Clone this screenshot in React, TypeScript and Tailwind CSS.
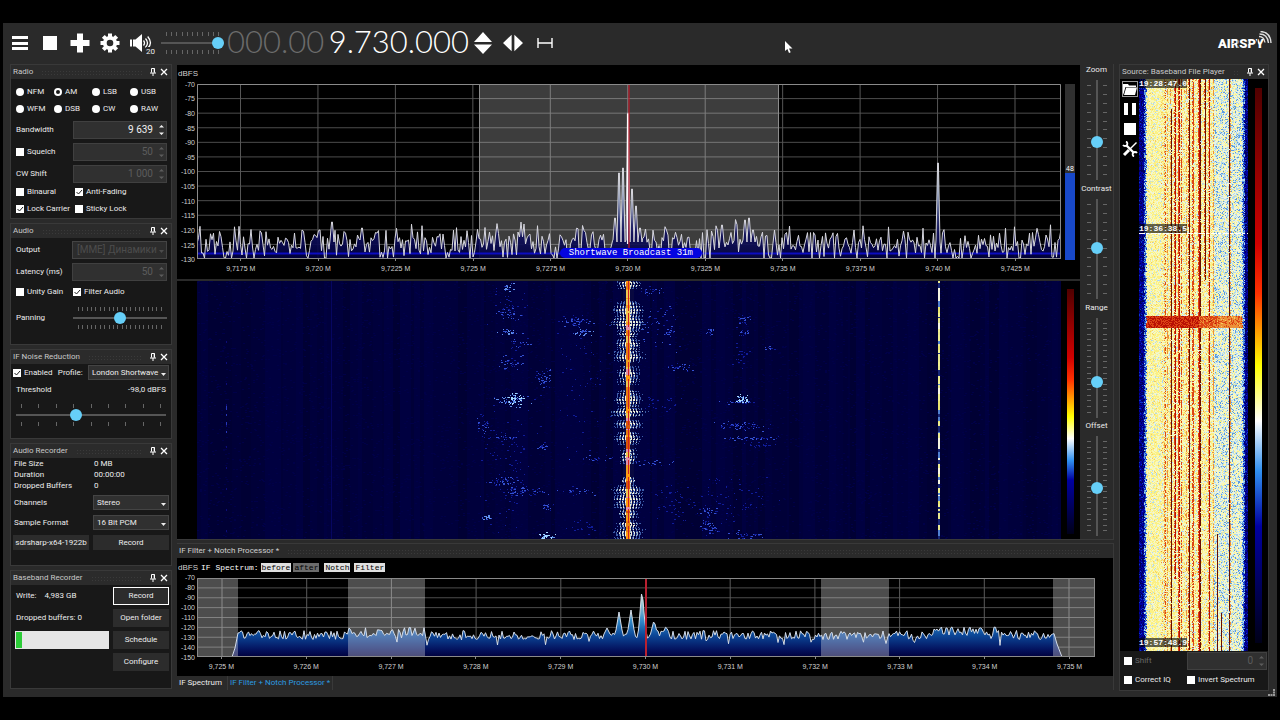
import { useId, type ReactNode } from "react";
import clsx from "clsx";

// ---------- helpers ----------

function createRandom(seed: number) {
  let state = seed;
  return () => {
    state = (state * 1664525 + 1013904223) % 4294967296;
    return state / 4294967296;
  };
}

type Point = [number, number];

function toPath(points: Point[]) {
  return points.map(([x, y], i) => `${i ? "L" : "M"}${x.toFixed(1)} ${y.toFixed(1)}`).join("");
}

// ---------- spectrum data ----------

function buildSpectrum(): Point[] {
  const random = createRandom(41);
  const peaks: Point[] = [[418, 134], [422, 89], [426, 84], [431, 29], [435, 105], [439, 122], [443, 144], [741, 79], [135, 138], [165, 144], [525, 141], [548, 136], [552, 134], [556, 146]];
  const points: Point[] = [];
  for (let x = 0; x <= 864; x += 1.5) {
    const bump = (x > 285 && x < 350) || (x > 515 && x < 565) ? 5 : 0;
    points.push([x, Math.min(174, 159 - bump + (random() - 0.5) * 26 + (random() - 0.5) * 14 + (random() > 0.92 ? 14 : 0))]);
  }
  return points
    .filter(([x]) => !peaks.some(([px]) => Math.abs(px - x) < 2.1))
    .concat(peaks.flatMap(([x, y]): Point[] => [[x - 2, 156], [x - 0.4, y], [x + 0.4, y], [x + 2, 158]]))
    .sort((a, b) => a[0] - b[0]);
}

function buildFilterSpectrum(): Point[] {
  const random = createRandom(97);
  const peaks: Point[] = [[410, 50], [422, 34], [434, 32], [445, 10], [457, 42], [469, 48]];
  const points: Point[] = [[35, 79], [38, 70]];
  for (let x = 41; x <= 857; x += 1.5) {
    let y = 57 + (random() - 0.5) * 9 + (random() > 0.95 ? 6 : 0);
    if (x > 150 && x < 230) y -= 3;
    if (x > 730 && x < 800) y -= 4;
    for (const [px, py] of peaks) {
      const distance = Math.abs(px - x);
      if (distance < 4) y = Math.min(y, py + (distance * (58 - py)) / 4);
    }
    points.push([x, y]);
  }
  points.push([860, 66], [865, 79]);
  return points;
}

const spectrum = buildSpectrum();
const filterSpectrum = buildFilterSpectrum();

// ---------- waterfall data ----------

const playerPalette = ["#00005c", "#0000a0", "#1038c8", "#5c9ce0", "#b0d8f0", "#eaf4e4", "#faf8b4", "#fbf084", "#f6cc60", "#ec9038", "#dc4414", "#b81004", "#681000"];

const playerStripes = [
  { x: 25, level: 9, from: 0, to: 572, fill: 0.45 },
  { x: 26, level: 10, from: 0, to: 572, fill: 0.4 },
  { x: 28, level: 9, from: 0, to: 572, fill: 0.5 },
  { x: 31, level: 9, from: 0, to: 572, fill: 0.5 },
  { x: 32, level: 12, from: 30, to: 572, fill: 0.97 },
  { x: 35, level: 10, from: 0, to: 500, fill: 0.5 },
  { x: 36, level: 11, from: 0, to: 500, fill: 0.9 },
  { x: 39, level: 10, from: 0, to: 572, fill: 0.8 },
  { x: 40, level: 11, from: 0, to: 572, fill: 0.75 },
  { x: 42, level: 10, from: 0, to: 572, fill: 0.6 },
  { x: 47, level: 9, from: 0, to: 572, fill: 0.45 },
  { x: 49, level: 10, from: 0, to: 572, fill: 0.45 },
  { x: 50, level: 12, from: 0, to: 572, fill: 0.97 },
  { x: 53, level: 10, from: 0, to: 572, fill: 0.5 },
  { x: 54, level: 10, from: 0, to: 572, fill: 0.75 },
  { x: 59, level: 10, from: 0, to: 572, fill: 0.6 },
  { x: 60, level: 11, from: 0, to: 572, fill: 0.97 },
  { x: 61, level: 12, from: 0, to: 572, fill: 0.9 },
  { x: 65, level: 10, from: 0, to: 202, fill: 0.5 },
  { x: 66, level: 12, from: 0, to: 202, fill: 0.97 },
  { x: 69, level: 9, from: 0, to: 572, fill: 0.5 },
  { x: 70, level: 11, from: 0, to: 572, fill: 0.85 },
  { x: 74, level: 9, from: 0, to: 572, fill: 0.55 },
  { x: 78, level: 12, from: 455, to: 572, fill: 1 },
  { x: 82, level: 12, from: 534, to: 572, fill: 1 },
  { x: 90, level: 12, from: 0, to: 572, fill: 0.97 },
  { x: 91, level: 9, from: 0, to: 572, fill: 0.5 },
];

function playerLevel(x: number, y: number, random: () => number) {
  const r = random();
  const left = 7 + (random() > 0.6 ? 1 : 0);
  const right = 103 - (random() > 0.6 ? 1 : 0);
  if (x < left - 2 || x > right + 2) return r < 0.4 ? 0 : r < 0.92 ? 1 : 2;
  if (x < left || x > right) return r < 0.4 ? 2 : r < 0.8 ? 3 : 4;
  if (y >= 237 && y < 249) {
    const base = x < 60 ? 11.3 : x < 78 ? 10.6 : 9.9;
    return Math.round(base - r * 1.5);
  }
  const stripe = playerStripes.find((s) => s.x === x && y >= s.from && y < s.to);
  if (stripe && r < stripe.fill) return stripe.level;
  const q = random();
  if (x < 22) return q < 0.06 ? 4 : q < 0.2 ? 5 : q < 0.55 ? 6 : q < 0.97 ? 7 : 8;
  if (x < 75) return q < 0.08 ? 4 : q < 0.24 ? 5 : q < 0.55 ? 6 : q < 0.88 ? 7 : q < 0.97 ? 8 : 9;
  return q < 0.12 ? 3 : q < 0.36 ? 4 : q < 0.64 ? 5 : q < 0.9 ? 6 : 7;
}

function buildPlayerWaterfall() {
  const random = createRandom(7);
  const paths = playerPalette.map(() => "");
  for (let y = 0; y < 572; y++) {
    let start = 0;
    let current = playerLevel(0, y, random);
    for (let x = 1; x <= 109; x++) {
      const level = x < 109 ? playerLevel(x, y, random) : -1;
      if (level !== current) {
        paths[current] += `M${start} ${y}.5h${x - start}`;
        start = x;
        current = level;
      }
    }
  }
  return paths;
}

// [x, y, spread x, spread y, count, brightness]
const speckClusters = [
  [311, 6, 6, 4, 16, 2], [310, 32, 10, 9, 30, 1], [311, 51, 9, 3, 22, 2], [320, 62, 10, 8, 24, 1], [313, 81, 10, 8, 34, 1],
  [346, 96, 7, 8, 40, 1], [316, 118, 8, 6, 60, 3], [313, 119, 18, 3, 40, 2], [286, 144, 6, 8, 26, 1], [306, 156, 16, 2, 24, 1],
  [346, 166, 5, 4, 18, 1], [381, 40, 14, 6, 50, 1], [386, 51, 7, 3, 26, 2], [453, 9, 14, 3, 22, 1], [471, 51, 6, 3, 14, 1],
  [486, 86, 12, 4, 26, 1], [513, 51, 5, 4, 14, 1], [546, 40, 8, 6, 22, 1], [546, 52, 6, 3, 16, 1], [572, 67, 6, 2, 10, 1],
  [543, 76, 8, 14, 22, 0], [545, 118, 6, 4, 36, 3], [543, 121, 16, 2, 24, 1], [543, 145, 24, 4, 60, 1], [553, 157, 22, 2, 40, 1],
  [562, 164, 18, 2, 20, 0], [306, 200, 14, 4, 40, 1], [326, 209, 20, 5, 54, 1], [350, 226, 6, 3, 16, 1], [290, 236, 6, 2, 20, 2],
  [350, 255, 8, 3, 36, 3], [513, 230, 10, 4, 30, 1], [513, 246, 8, 6, 40, 1], [546, 254, 14, 4, 34, 1], [396, 177, 20, 3, 22, 1],
  [453, 182, 20, 4, 26, 1], [466, 123, 20, 8, 26, 0], [380, 210, 16, 4, 22, 1], [310, 20, 20, 20, 26, 0], [540, 220, 30, 20, 60, 0],
  [390, 100, 40, 70, 70, 0], [460, 40, 24, 24, 50, 1], [310, 180, 24, 60, 90, 0], [480, 220, 24, 20, 50, 0], [386, 245, 14, 6, 20, 0],
];

const speckColors = ["#101c98", "#3450d0", "#6090ec", "#a4d8ff"];

function buildSpecks() {
  const random = createRandom(23);
  const paths = speckColors.map(() => "");
  const spread = () => (random() + random() + random() - 1.5) / 1.5;
  for (const [cx, cy, rx, ry, count, bright] of speckClusters) {
    for (let i = 0; i < count; i++) {
      const x = Math.round(cx + spread() * rx * 1.6);
      const y = Math.round(cy + spread() * ry * 1.6);
      if (y < 0 || y > 257) continue;
      const level = Math.max(0, bright - (random() > 0.55 ? 1 : 0));
      paths[level] += `M${x} ${y}.5h${random() > 0.6 ? 2 : 1}`;
    }
  }
  return paths;
}

// [y, half height, half width]
const bursts = [
  [2, 5, 14], [29, 9, 16], [42, 7, 17], [52, 3, 12], [64, 7, 14], [75, 6, 17], [94, 9, 13], [117, 8, 15], [131, 4, 18],
  [143, 4, 17], [157, 6, 14], [175, 8, 11], [199, 4, 8], [209, 5, 16], [220, 8, 17], [232, 4, 12], [243, 4, 12], [252, 6, 17],
];

function buildBursts() {
  const random = createRandom(5);
  let bright = "";
  let warm = "";
  let dim = "";
  for (const [cy, hh, hw] of bursts) {
    for (let y = Math.max(0, cy - hh); y <= Math.min(257, cy + hh); y++) {
      const rowGain = y % 3 === 0 ? 0.4 + random() * 0.3 : 0.6 + random() * 0.6;
      const lean = Math.abs(y - cy) / (hh + 1);
      const reach = hw * (0.7 + random() * 0.5);
      for (let k = 2; k < reach; k++) {
        const wave = Math.cos((k + lean * 1.6) * 2.15) * 0.5 + 0.5;
        for (const side of [-1, 1]) {
          const power = wave * rowGain * (1.25 - k / hw) * (1.15 - lean * 0.6) + (random() - 0.5) * 0.25;
          const dot = `M${431 + side * k} ${y}.5h1`;
          if (power > 0.62) bright += dot;
          else if (power > 0.48) warm += dot;
          else if (power > 0.26) dim += dot;
        }
      }
    }
  }
  return { bright, warm, dim };
}

function buildStripes() {
  const random = createRandom(77);
  const shades = ["#000034", "#000038", "#00003c", "#000040"];
  const stripes: { x: number; width: number; color: string }[] = [];
  for (let x = 0; x < 864; ) {
    const width = 2 + Math.floor(random() * 10);
    stripes.push({ x, width, color: shades[Math.floor(random() * shades.length)] });
    x += width;
  }
  return stripes;
}

function buildGrain() {
  const random = createRandom(311);
  let d = "";
  for (let i = 0; i < 6000; i++) {
    d += `M${Math.floor(random() * 864)} ${Math.floor(random() * 258)}.5h2`;
  }
  return d;
}

function buildCarrier(seed: number, colors: string[], maxLength: number) {
  const random = createRandom(seed);
  const parts: { y: number; height: number; color: string }[] = [];
  for (let y = 0; y < 258; ) {
    const height = 1 + Math.floor(random() * maxLength);
    parts.push({ y, height, color: colors[Math.floor(random() * colors.length)] });
    y += height;
  }
  return parts;
}

const playerWaterfall = buildPlayerWaterfall();
const specks = buildSpecks();
const burstPaths = buildBursts();
const stripes = buildStripes();
const grain = buildGrain();
const mainCarrier = buildCarrier(13, ["#e88010", "#f0a020", "#ff9c10", "#f0c850", "#d85808", "#e090a8"], 8);
const sideCarrier = buildCarrier(29, ["#f0f090", "#f4f4e0", "#e8e470", "#5080d0", "#182878", "#e8e890"], 6);

// ---------- controls ----------

function Panel({ title, className, children }: { title: string; className?: string; children: ReactNode }) {
  return (
    <section className={clsx("flex flex-col border border-[#393939] bg-[#181818]", className)}>
      <header className="flex h-[14px] shrink-0 items-center gap-2 bg-[#2b2b2b] pr-[3px] pl-[2px]">
        <h2 className="whitespace-nowrap text-[#c8c8c8]">{title}</h2>
        <span className="h-[5px] flex-1 bg-[radial-gradient(#3a3a3a_35%,transparent_40%)] bg-[length:3px_3px]" />
        <button type="button" aria-label={`Pin ${title}`}>
          <svg width="6" height="8" viewBox="0 0 6 8" fill="none" stroke="#fff">
            <path d="M1.5 4.5V.5h3v4M0 5h6M3 5v3M4.2.5v4" />
          </svg>
        </button>
        <button type="button" aria-label={`Close ${title}`} className="-ml-1">
          <svg width="8" height="8" viewBox="0 0 8 8" stroke="#fff" strokeWidth="1.3">
            <path d="M1 1l6 6M7 1L1 7" />
          </svg>
        </button>
      </header>
      {children}
    </section>
  );
}

function Check({ label, checked, dim }: { label: string; checked?: boolean; dim?: boolean }) {
  return (
    <label className={clsx("flex items-center gap-[3px] whitespace-nowrap", dim && "text-[#6a6a6a]")}>
      <span className="relative size-2 shrink-0">
        <input type="checkbox" defaultChecked={checked} className="peer block size-2 appearance-none bg-white" />
        <svg viewBox="0 0 8 8" className="pointer-events-none absolute inset-0 hidden size-2 peer-checked:block" fill="none" stroke="#222">
          <path d="M1.5 4l2 2L7 2" />
        </svg>
      </span>
      {label}
    </label>
  );
}

function NumberBox({ label, value, disabled }: { label: string; value: string; disabled?: boolean }) {
  return (
    <span className={clsx("flex h-[18px] min-w-0 flex-1 items-center border border-[#404040] bg-[#303030] pr-[2px]", disabled ? "text-[#5c5c5c]" : "text-[#f0f0f0]")}>
      <input aria-label={label} defaultValue={value} disabled={disabled} className="w-full min-w-0 bg-transparent pr-[6px] text-right text-[10px] leading-4 outline-none" />
      <svg width="5" height="12" viewBox="0 0 5 12" fill="currentColor" className="shrink-0">
        <path d="M0 3.5L2.5 1 5 3.5zM0 8.5L2.5 11 5 8.5z" />
      </svg>
    </span>
  );
}

function Dropdown({ id, label, value, disabled, className }: { id?: string; label: string; value: string; disabled?: boolean; className?: string }) {
  return (
    <span className={clsx("relative border border-[#444]", disabled ? "bg-[#2c2c2c] text-[#4c4c4c]" : "bg-[#303030]", className)}>
      <select id={id} aria-label={label} disabled={disabled} className={clsx("block h-full w-full appearance-none bg-transparent outline-none", disabled ? "pl-1 text-[10px] leading-4" : "pl-[3px]")}>
        <option>{value}</option>
      </select>
      <svg width="5" height="3" viewBox="0 0 5 3" fill="currentColor" className="pointer-events-none absolute top-1/2 right-[2px]">
        <path d="M0 0h5L2.5 3z" />
      </svg>
    </span>
  );
}

function PushButton({ children, className }: { children: ReactNode; className?: string }) {
  return (
    <button type="button" className={clsx("flex items-center justify-center bg-[#2c2c2c] whitespace-nowrap", className)}>
      {children}
    </button>
  );
}

function Ticks({ count, vertical }: { count: number; vertical?: boolean }) {
  return (
    <span className={clsx("flex justify-between", vertical ? "h-[90px] w-1 flex-col" : "h-1 w-full")}>
      {Array.from({ length: count }, (_, i) => (
        <span key={i} className={clsx("bg-[#666]", vertical ? "h-px w-1" : "h-1 w-px")} />
      ))}
    </span>
  );
}

function HorizontalSlider({ label, ticks, value, className }: { label: string; ticks: number; value: number; className?: string }) {
  return (
    <span className={clsx("flex flex-col gap-px", className)}>
      <span className="px-[5px]"><Ticks count={ticks} /></span>
      <input
        type="range"
        aria-label={label}
        defaultValue={value}
        className="block h-3 w-full appearance-none bg-transparent bg-[linear-gradient(#555,#555)] bg-[length:100%_2px] bg-center bg-no-repeat [&::-webkit-slider-thumb]:size-3 [&::-webkit-slider-thumb]:appearance-none [&::-webkit-slider-thumb]:rounded-full [&::-webkit-slider-thumb]:bg-[#66cff8]"
      />
      <span className="px-[5px]"><Ticks count={ticks} /></span>
    </span>
  );
}

function VerticalSlider({ label, ticks, value }: { label: string; ticks: number; value: number }) {
  const id = useId();
  return (
    <div className="flex flex-1 flex-col items-center gap-1">
      <label htmlFor={id} className="leading-3">{label}</label>
      <div className="flex items-center">
        <Ticks count={ticks} vertical />
        <input
          id={id}
          type="range"
          defaultValue={value}
          className="block h-[100px] w-3 appearance-none bg-transparent bg-[linear-gradient(#555,#555)] bg-[length:2px_100%] bg-center bg-no-repeat [direction:rtl] [writing-mode:vertical-lr] [&::-webkit-slider-thumb]:size-3 [&::-webkit-slider-thumb]:appearance-none [&::-webkit-slider-thumb]:rounded-full [&::-webkit-slider-thumb]:bg-[#66cff8]"
        />
        <Ticks count={ticks} vertical />
      </div>
    </div>
  );
}

// ---------- toolbar ----------

function IconButton({ label, children, className }: { label: string; children: ReactNode; className?: string }) {
  return (
    <button type="button" aria-label={label} className={clsx("flex items-center justify-center", className ?? "size-5")}>
      {children}
    </button>
  );
}

function Toolbar() {
  return (
    <header className="relative flex h-[41px] items-center pb-[2px] pl-[7px]">
      <div className="flex gap-[10px]">
        <IconButton label="Menu">
          <svg width="16" height="16" viewBox="0 0 16 16" fill="#fff"><path d="M0 1h16v3H0zM0 7h16v3H0zM0 12h16v3H0z" /></svg>
        </IconButton>
        <IconButton label="Stop">
          <svg width="16" height="16" viewBox="0 0 16 16" fill="#fff"><path d="M1 1h14v14H1z" /></svg>
        </IconButton>
        <IconButton label="Add">
          <svg width="20" height="20" viewBox="0 0 20 20" fill="#fff"><path d="M7 .5h6V7h6.5v6H13v6.5H7V13H.5V7H7z" /></svg>
        </IconButton>
        <IconButton label="Settings">
          <svg width="20" height="20" viewBox="0 0 20 20" fill="none" stroke="#fff">
            <circle cx="10" cy="10" r="5.2" strokeWidth="3.8" />
            <path strokeWidth="4" d="M10 .5v3.5M10 16v3.5M.5 10H4M16 10h3.5M3.3 3.3l2.4 2.4M14.3 14.3l2.4 2.4M16.7 3.3l-2.4 2.4M5.7 14.3l-2.4 2.4" />
          </svg>
        </IconButton>
        <IconButton label="Mute" className="relative h-5 w-[25px] justify-start">
          <svg width="22" height="20" viewBox="0 0 22 20" fill="none" stroke="#fff" strokeWidth="1.3">
            <path d="M0 6.5h2v7H0zM3 6.5h2.5L12 1v18l-6.5-5.5H3z" fill="#fff" stroke="none" />
            <path d="M13.5 7.5q2 2.5 0 5M15.5 5.5q4 4.5 0 9M17.7 3.5q5.5 6.5 0 12" />
          </svg>
          <span className="absolute right-0 -bottom-[3px] bg-[#2a2a2a] text-[8px] leading-[9px]">20</span>
        </IconButton>
      </div>
      <HorizontalSlider label="Volume" ticks={11} value={100} className="ml-[6px] w-[63px]" />
      <div className="ml-[3px] flex w-[242px] justify-between pb-[2px] font-['Lato'] text-[31px] leading-none font-light text-white">
        <span className="text-[#6c6c6c]">000.00</span>
        <span>9.730.000</span>
      </div>
      <div className="ml-1 flex items-center gap-[10px]">
        <IconButton label="Step frequency">
          <svg width="20" height="24" viewBox="0 0 20 24" fill="#fff"><path d="M1 11L10 1l9 10zM1 13.5h18L10 23z" /></svg>
        </IconButton>
        <IconButton label="Shift spectrum">
          <svg width="22" height="18" viewBox="0 0 22 18" fill="#fff"><path d="M9.5 0v18L0 9zM12.5 0v18L22 9z" /></svg>
        </IconButton>
        <IconButton label="Center spectrum" className="ml-1 h-5 w-4">
          <svg width="16" height="10" viewBox="0 0 16 10" stroke="#fff" strokeWidth="1.4"><path d="M1 0v10M15 0v10M1 5h14" /></svg>
        </IconButton>
      </div>
      <svg width="56" height="24" viewBox="0 0 56 24" role="img" aria-label="AIRSPY" className="mr-[5px] ml-auto">
        <text x="2" y="17" fill="#fff" fontFamily="Roboto" fontWeight="900" fontSize="13">AIRSPY</text>
        <path d="M16.5 12.5h2M22 7v12M32 10v3M41.5 7v12" stroke="#2a2a2a" strokeWidth="0.7" />
        <path d="M43 5.5q5 0 6 6M43.5 3q8 0 9 9M44.5 .5q10 .5 10.5 11.5" fill="none" stroke="#ddd" strokeWidth="1.4" />
      </svg>
      <svg width="8" height="12" viewBox="0 0 8 12" className="absolute top-[18px] left-[782px]">
        <path d="M0 0v10l2.4-2L4 12l1.7-.7L4 7.5h3.5z" fill="#fff" />
      </svg>
    </header>
  );
}

// ---------- left dock ----------

const radioModes = ["NFM", "AM", "LSB", "USB", "WFM", "DSB", "CW", "RAW"];

function LeftDock() {
  return (
    <aside className="flex w-[162px] shrink-0 flex-col gap-1">
      <Panel title="Radio" className="h-[155px]">
        <div className="pt-1 pr-1 pl-[5px]">
          <div className="grid grid-cols-[repeat(4,38px)]">
            {radioModes.map((mode) => (
              <label key={mode} className="flex h-[17px] items-center gap-[3px]">
                <input
                  type="radio"
                  name="mode"
                  defaultChecked={mode === "AM"}
                  className="size-2 appearance-none rounded-full bg-white checked:border-2 checked:border-white checked:bg-[#181818]"
                />
                {mode}
              </label>
            ))}
          </div>
          <div className="mt-1 flex flex-col gap-1">
            <div className="flex items-center"><span className="w-[57px]">Bandwidth</span><NumberBox label="Bandwidth" value="9 639" /></div>
            <div className="flex items-center"><span className="w-[57px]"><Check label="Squelch" /></span><NumberBox label="Squelch level" value="50" disabled /></div>
            <div className="flex items-center"><span className="w-[57px]">CW Shift</span><NumberBox label="CW Shift" value="1 000" disabled /></div>
          </div>
          <div className="grid grid-cols-[59px_1fr]">
            <span className="flex h-[17px]"><Check label="Binaural" /></span>
            <span className="flex h-[17px]"><Check label="Anti-Fading" checked /></span>
            <span className="flex h-[17px]"><Check label="Lock Carrier" checked /></span>
            <span className="flex h-[17px]"><Check label="Sticky Lock" /></span>
          </div>
        </div>
      </Panel>

      <Panel title="Audio" className="h-[122px]">
        <div className="flex flex-col gap-1 pt-[3px] pr-1 pl-[5px]">
          <div className="flex items-center"><span className="w-[56px]">Output</span><Dropdown label="Output" value="[MME] Динамики" disabled className="h-[18px] min-w-0 flex-1" /></div>
          <div className="flex items-center"><span className="w-[56px]">Latency (ms)</span><NumberBox label="Latency" value="50" disabled /></div>
          <div className="-mt-[2px] grid h-[17px] grid-cols-[57px_1fr]">
            <Check label="Unity Gain" />
            <Check label="Filter Audio" checked />
          </div>
          <div className="mt-[3px] flex items-center"><span className="w-[57px]">Panning</span><HorizontalSlider label="Panning" ticks={20} value={50} className="flex-1" /></div>
        </div>
      </Panel>

      <Panel title="IF Noise Reduction" className="h-[90px]">
        <div className="flex h-[17px] items-center justify-between px-[2px]">
          <Check label="Enabled" checked />
          <label htmlFor="profile">Profile:</label>
          <Dropdown id="profile" label="Profile" value="London Shortwave" className="h-[15px] w-[81px]" />
        </div>
        <div className="flex h-[17px] items-center justify-between px-[5px]">
          <span>Threshold</span>
          <span>-98,0 dBFS</span>
        </div>
        <HorizontalSlider label="Threshold" ticks={9} value={39} className="mx-[5px] mt-[6px]" />
      </Panel>

      <Panel title="Audio Recorder" className="h-[123px]">
        <div className="px-[2px]">
          <dl className="grid grid-cols-[80px_1fr] pl-px leading-[11px]">
            <dt>File Size</dt><dd>0 MB</dd>
            <dt>Duration</dt><dd>00:00:00</dd>
            <dt>Dropped Buffers</dt><dd>0</dd>
          </dl>
          <div className="mt-1 grid grid-cols-[76px_76px] justify-between gap-y-[5px]">
            <label htmlFor="channels" className="pl-px leading-[15px]">Channels</label>
            <Dropdown id="channels" label="Channels" value="Stereo" className="h-[15px]" />
            <label htmlFor="format" className="pl-px leading-[15px]">Sample Format</label>
            <Dropdown id="format" label="Sample Format" value="16 Bit PCM" className="h-[15px]" />
            <PushButton className="h-[15px]">sdrsharp-x64-1922b</PushButton>
            <PushButton className="h-[15px]">Record</PushButton>
          </div>
        </div>
      </Panel>

      <Panel title="Baseband Recorder" className="h-[119px]">
        <div className="grid auto-rows-[18px] grid-cols-[1fr_56px] items-center gap-x-1 gap-y-1 px-[2px] pt-[2px]">
          <span className="flex gap-2 pl-[3px]"><span>Write:</span><span>4,983 GB</span></span>
          <PushButton className="h-full border border-white">Record</PushButton>
          <span className="pl-[3px]">Dropped buffers: 0</span>
          <PushButton className="h-full">Open folder</PushButton>
          <span role="progressbar" aria-label="Disk usage" aria-valuenow={6} className="ml-[2px] h-full bg-[#e6e6e6] p-px">
            <span className="block h-full w-[6%] bg-[#2ccc38]" />
          </span>
          <PushButton className="h-full">Schedule</PushButton>
          <span />
          <PushButton className="h-full">Configure</PushButton>
        </div>
      </Panel>
    </aside>
  );
}

// ---------- plots ----------

function YAxis({ from, step, count, className }: { from: number; step: number; count: number; className: string }) {
  return (
    <div className={clsx("flex flex-col pr-[2px] text-right", className)}>
      {Array.from({ length: count }, (_, i) => (
        <span key={i} className="flex flex-1 items-center justify-end leading-none">{from - i * step}</span>
      ))}
    </div>
  );
}

function XAxis({ labels, className }: { labels: string[]; className: string }) {
  return (
    <div className={clsx("flex", className)}>
      {labels.map((label) => (
        <span key={label} className="flex flex-1 flex-col items-center gap-[3px] whitespace-nowrap leading-[10px] before:h-[2px] before:w-px before:bg-[#888]">{label}</span>
      ))}
    </div>
  );
}

const spectrumTicks = ["9,7175 M", "9,720 M", "9,7225 M", "9,725 M", "9,7275 M", "9,730 M", "9,7325 M", "9,735 M", "9,7375 M", "9,740 M", "9,7425 M"];
const filterTicks = ["9,725 M", "9,726 M", "9,727 M", "9,728 M", "9,729 M", "9,730 M", "9,731 M", "9,732 M", "9,733 M", "9,734 M", "9,735 M"];

function SpectrumView() {
  return (
    <div className="flex h-[214px] bg-black font-['Liberation_Sans'] text-[7px] text-[#d0d0d0]">
      <div className="w-5 shrink-0">
        <div className="h-3 pt-1 pl-px text-[8px] leading-[10px]">dBFS</div>
        <YAxis from={-70} step={5} count={13} className="h-[190px]" />
      </div>
      <div className="min-w-0 flex-1 pt-[19px]">
        <div className="relative">
          <svg viewBox="0 0 864 175" preserveAspectRatio="none" className="block h-[175px] w-full">
            <defs>
              <linearGradient id="spectrum-fill" x1="0" y1="0" x2="0" y2="175" gradientUnits="userSpaceOnUse">
                <stop offset="0.15" stopColor="#e8e8f8" />
                <stop offset="0.6" stopColor="#8098c0" />
                <stop offset="0.85" stopColor="#101060" />
                <stop offset="1" stopColor="#000040" />
              </linearGradient>
            </defs>
            {Array.from({ length: 13 }, (_, i) => (
              <path key={i} d={`M0 ${(i * 175) / 12}H864`} stroke="#4c4c4c" />
            ))}
            {spectrumTicks.map((tick, i) => (
              <path key={tick} d={`M${43.5 + i * 77.45} 0V175`} stroke="#565656" />
            ))}
            <rect x="282.5" width="298.5" height="175" fill="#fff" fillOpacity="0.24" />
            <path d="M282.5 0V175M581.5 0V175" stroke="#8c8c8c" />
            <path d={`${toPath(spectrum)}L864 175L0 175Z`} fill="url(#spectrum-fill)" fillOpacity="0.9" />
            <path d="M0 169.5H864" stroke="#0c0cc0" strokeWidth="2" />
            <path d={toPath(spectrum)} fill="none" stroke="#d8d8de" strokeWidth="1" />
            <path d="M432 0V175" stroke="#c01828" strokeWidth="1.2" />
            <path d="M430.5 30V160" stroke="#fff" strokeWidth="1.2" />
            <path d="M.5 175V.5H863.5V175M0 174.5H864" fill="none" stroke="#8a8a8a" />
          </svg>
          <div className="absolute bottom-px left-[42%] w-[142px] rounded-full bg-[#0404e0] text-center font-['Liberation_Mono'] text-[9px] leading-[10px] whitespace-nowrap text-white">
            Shortwave Broadcast 31m
          </div>
        </div>
        <XAxis labels={spectrumTicks} className="pr-[7px] pl-[5px]" />
      </div>
      <div className="w-[19px] shrink-0 pt-[19px] pl-1">
        <div className="flex h-[176px] w-[10px] flex-col bg-[#303030] pt-[81px] text-center leading-2 text-white">
          48
          <span className="w-full flex-1 bg-[#1848c8]" />
        </div>
      </div>
    </div>
  );
}

function WaterfallView() {
  return (
    <div className="flex h-[258px] bg-black">
      <div className="w-5 shrink-0" />
      <svg viewBox="0 0 864 258" preserveAspectRatio="none" shapeRendering="crispEdges" className="block h-[258px] min-w-0 flex-1">
        {stripes.map((s) => (
          <rect key={s.x} x={s.x} width={s.width} height="258" fill={s.color} />
        ))}
        <path d={grain} stroke="#000048" />
        <path d="M134.5 0V258" stroke="#060660" />
        <path d="M29 124V155" stroke="#2838b8" strokeDasharray="5 4 2 6" />
        <path d="M29 60V258" stroke="#0c0c78" strokeDasharray="2 19" />
        {specks.map((d, i) => (
          <path key={speckColors[i]} d={d} stroke={speckColors[i]} />
        ))}
        <rect x="426" width="11" height="258" fill="#080840" />
        <path d={burstPaths.dim} stroke="#3c5ca8" />
        <path d={burstPaths.warm} stroke="#a8bcc8" />
        <path d={burstPaths.bright} stroke="#f0f0dc" />
        {mainCarrier.map((p) => (
          <rect key={p.y} x="429" y={p.y} width="4" height={p.height} fill={p.color} />
        ))}
        <path d="M431.5 0V258" stroke="#d02020" strokeDasharray="30 2 14 3" />
        {sideCarrier.map((p) => (
          <rect key={p.y} x="741" y={p.y} width="2" height={p.height} fill={p.color} />
        ))}
      </svg>
      <div className="w-[19px] shrink-0 pt-2 pl-[6px]">
        <div className="h-[245px] w-[7px] bg-[linear-gradient(#500000,#d00000_28%,#ff3000_37%,#ffff00_52%,#ffffff_61%,#3090f0_70%,#0000a0_78%,#000018)]" />
      </div>
    </div>
  );
}

function FilterView() {
  return (
    <section className="flex flex-col border-t border-r border-[#393939]">
      <header className="flex h-[14px] items-center gap-2 pl-[2px]">
        <h2 className="text-[#d0d0d0]">IF Filter + Notch Processor *</h2>
        <span className="mr-3 h-[5px] flex-1 bg-[radial-gradient(#3a3a3a_35%,transparent_40%)] bg-[length:3px_3px]" />
      </header>
      <div className="h-[118px] bg-black font-['Liberation_Sans'] text-[7px] text-[#d0d0d0]">
        <div className="flex h-[15px] items-center pt-1 pl-px font-['Liberation_Mono'] text-[8px] leading-[9px]">
          <span className="w-[23px] font-['Liberation_Sans']">dBFS</span>
          <span className="text-white">IF Spectrum:</span>
          <button type="button" className="ml-[2px] bg-[#e0e0e0] px-px text-black">before</button>
          <button type="button" className="ml-[2px] bg-[#6c6c6c] px-px text-black">after</button>
          <button type="button" className="ml-[5px] bg-[#e0e0e0] px-px text-black">Notch</button>
          <button type="button" className="ml-1 bg-[#e0e0e0] px-px text-black">Filter</button>
        </div>
        <div className="flex">
          <YAxis from={-70} step={10} count={9} className="h-[89px] w-5 shrink-0" />
          <svg viewBox="0 0 898 79" preserveAspectRatio="none" className="mt-[5px] block h-[79px] min-w-0 flex-1">
            <defs>
              <linearGradient id="filter-fill" x1="0" y1="0" x2="0" y2="79" gradientUnits="userSpaceOnUse">
                <stop offset="0.2" stopColor="#d0e8d8" />
                <stop offset="0.55" stopColor="#3088c8" />
                <stop offset="0.72" stopColor="#0c4898" />
                <stop offset="0.9" stopColor="#041460" />
                <stop offset="1" stopColor="#00003c" />
              </linearGradient>
            </defs>
            {Array.from({ length: 9 }, (_, i) => (
              <path key={i} d={`M0 ${(i * 79) / 8}H898`} stroke="#4c4c4c" />
            ))}
            {filterTicks.map((tick, i) => (
              <path key={tick} d={`M${25 + i * 84.7} 0V79`} stroke="#5a5a5a" />
            ))}
            <path d={`${toPath(filterSpectrum)}Z`} fill="url(#filter-fill)" />
            <path d="M0 0H41V79H0zM151 0H228V79H151zM624 0H692V79H624zM856 0H898V79H856z" fill="#fff" fillOpacity="0.3" />
            <path d={toPath(filterSpectrum)} fill="none" stroke="#d4dce8" />
            <path d="M449 0V79" stroke="#b82030" strokeWidth="2" />
            <path d="M.5 79V.5H897.5V79M0 78.5H898" fill="none" stroke="#8a8a8a" />
          </svg>
          <div className="w-[18px] shrink-0" />
        </div>
        <XAxis labels={filterTicks} className="-mt-[5px] pr-px pl-[2px]" />
      </div>
      <nav className="flex h-[14px] items-center leading-[14px]">
        <a href="#spectrum" className="px-[2px]">IF Spectrum</a>
        <a href="#filter" className="ml-[3px] border-x border-[#393939] px-[2px] text-[#2c9ce0]">IF Filter + Notch Processor *</a>
      </nav>
    </section>
  );
}

// ---------- file player ----------

function Timestamp({ children, className }: { children: ReactNode; className: string }) {
  return (
    <span className={clsx("absolute left-0 bg-black/60 font-['Liberation_Mono'] text-[8px] leading-[9px] font-bold text-white", className)}>{children}</span>
  );
}

function FilePlayer() {
  return (
    <Panel title="Source: Baseband File Player" className="w-[150px] shrink-0">
      <div className="flex h-[572px] bg-black">
        <div className="flex w-[19px] flex-col items-center gap-1 pt-[2px]">
          <IconButton label="Open file" className="size-4 border border-[#999]">
            <svg width="14" height="12" viewBox="0 0 14 12" fill="#fff"><path d="M0 12V1h5l1 1.500h7V4H2.500L.8 10zM3.200 4.500H14L12 12H1z" /></svg>
          </IconButton>
          <IconButton label="Pause" className="size-4">
            <svg width="12" height="12" viewBox="0 0 12 12" fill="#fff"><path d="M0 0h4v12H0zM8 0h4v12H8z" /></svg>
          </IconButton>
          <IconButton label="Stop playback" className="size-4">
            <svg width="12" height="12" viewBox="0 0 12 12" fill="#fff"><path d="M0 0h12v12H0z" /></svg>
          </IconButton>
          <IconButton label="Player settings" className="size-4">
            <svg width="16" height="16" viewBox="0 0 16 16" fill="none" stroke="#fff">
              <path d="M4 4l8 8" strokeWidth="2.4" />
              <path d="M1 4a2.500 2.500 0 0 0 4 0a2.500 2.500 0 0 0-1-3.500M15 12a2.500 2.500 0 0 0-4 0a2.500 2.500 0 0 0 1 3.500" strokeWidth="1.8" />
              <path d="M14.5 1.500L8 8" strokeWidth="1.5" />
              <path d="M7 9L2 14" strokeWidth="3" />
            </svg>
          </IconButton>
        </div>
        <div className="relative w-[109px]">
          <svg viewBox="0 0 109 572" shapeRendering="crispEdges" preserveAspectRatio="none" className="block h-[572px] w-full">
            {playerWaterfall.map((d, i) => (
              <path key={playerPalette[i]} d={d} stroke={playerPalette[i]} />
            ))}
            <path d="M0 154.5H109" stroke="#fff" strokeDasharray="6 1 3 2" />
          </svg>
          <Timestamp className="top-0">19:28:47.0</Timestamp>
          <Timestamp className="top-[145px]">19:36:38.5</Timestamp>
          <Timestamp className="bottom-1">19:57:48.9</Timestamp>
        </div>
        <div className="mt-[9px] ml-[7px] h-[555px] w-[7px] bg-[linear-gradient(#500000,#d00000_28%,#ff3000_37%,#ffff00_50%,#ffffff_60%,#3090f0_69%,#0000a0_79%,#000018)]" />
      </div>
      <div className="grid grid-cols-[63px_1fr] pt-px pr-px pl-1">
        <Check label="Shift" dim />
        <span className="flex"><NumberBox label="Shift" value="0" disabled /></span>
        <span className="flex h-5"><Check label="Correct IQ" /></span>
        <span className="flex h-5"><Check label="Invert Spectrum" /></span>
      </div>
    </Panel>
  );
}

export default function App() {
  return (
    <div className="min-h-screen bg-black px-[3px] pt-[23px] font-['Roboto',sans-serif] text-[8px] leading-3 text-[#ececec]">
      <div className="relative bg-[#2a2a2a] pb-[6px]">
        <Toolbar />
        <main className="flex pr-2 pl-[7px]">
          <LeftDock />
          <div className="mx-[5px] flex min-w-0 flex-1 flex-col gap-[3px]">
            <div className="flex border-r border-b border-[#393939]">
              <div className="flex min-w-0 flex-1 flex-col gap-[2px] pt-px">
                <SpectrumView />
                <WaterfallView />
              </div>
              <div className="flex w-[33px] shrink-0 flex-col">
                <VerticalSlider label="Zoom" ticks={11} value={36} />
                <VerticalSlider label="Contrast" ticks={11} value={51} />
                <VerticalSlider label="Range" ticks={17} value={34} />
                <VerticalSlider label="Offset" ticks={17} value={48} />
              </div>
            </div>
            <FilterView />
          </div>
          <FilePlayer />
        </main>
        <svg width="7" height="7" viewBox="0 0 7 7" fill="#999" className="absolute right-[2px] bottom-px">
          <path d="M5 0h2v2H5zM5 2.5h2v2H5zM2.5 5h2v2h-2zM5 5h2v2H5zM0 5h2v2H0z" />
        </svg>
      </div>
    </div>
  );
}
